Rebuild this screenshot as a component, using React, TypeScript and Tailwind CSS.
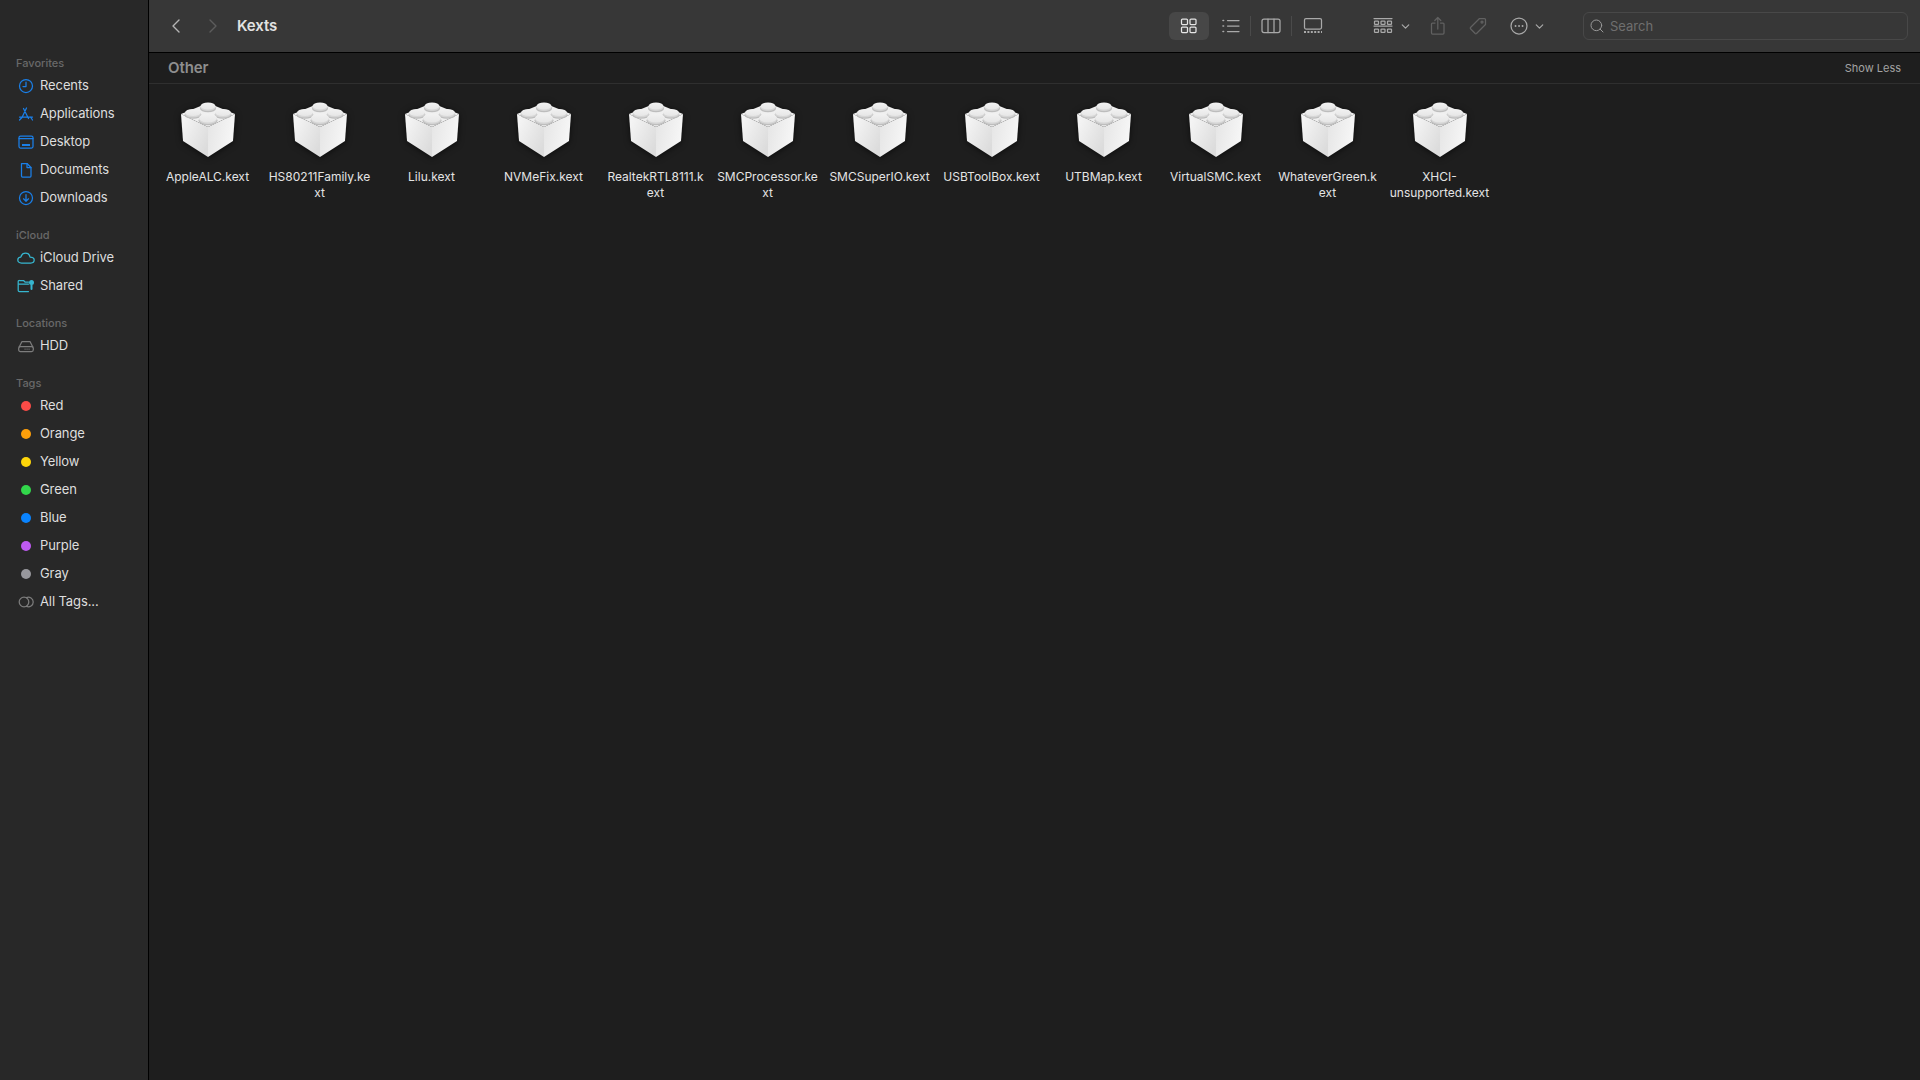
import type { ReactNode } from "react";
import { ChevronLeft, ChevronRight, ChevronDown, Search } from "lucide-react";

const font = "font-['Inter','Liberation_Sans',sans-serif]";

const Icon = ({ children, w = 20, h = 20, vb, className }: { children: ReactNode; w?: number; h?: number; vb?: string; className?: string }) => (
  <svg width={w} height={h} viewBox={vb ?? `0 0 ${w} ${h}`} fill="none" stroke="currentColor" strokeWidth="1.25" strokeLinecap="round" strokeLinejoin="round" className={className}>
    {children}
  </svg>
);

const Stud = ({ cx, cy, rx, ry }: { cx: number; cy: number; rx: number; ry: number }) => (
  <g>
    <ellipse cx={cx} cy={cy + 2.5} rx={rx + 0.5} ry={ry + 0.3} fill="#bdbdbd" />
    <ellipse cx={cx} cy={cy + 1.5} rx={rx} ry={ry} fill="#d6d6d6" />
    <ellipse cx={cx} cy={cy} rx={rx} ry={ry} fill="url(#studTop)" />
  </g>
);

const KextIcon = () => (
  <svg width="60" height="60" viewBox="0 0 60 60" className="drop-shadow-[0_1px_3px_rgba(0,0,0,0.6)]">
    <defs>
      <linearGradient id="leftFace" x1="0" y1="0" x2="1" y2="0.7">
        <stop offset="0" stopColor="#f8f8f8" />
        <stop offset="1" stopColor="#dcdcdc" />
      </linearGradient>
      <linearGradient id="rightFace" x1="0" y1="0.3" x2="1" y2="0.6">
        <stop offset="0" stopColor="#e6e6e6" />
        <stop offset="1" stopColor="#f8f8f8" />
      </linearGradient>
      <linearGradient id="studTop" x1="0" y1="0" x2="0" y2="1">
        <stop offset="0" stopColor="#f2f2f2" />
        <stop offset="1" stopColor="#e6e6e6" />
      </linearGradient>
    </defs>
    <path d="M3 14 L30 3 L57 14 L30 27 Z" fill="#efefef" />
    <path d="M3 14 L30 27 L30 57 L5 41 Z" fill="url(#leftFace)" />
    <path d="M57 14 L30 27 L30 57 L55 41 Z" fill="url(#rightFace)" />
    <Stud cx={30} cy={6} rx={7.5} ry={3.5} />
    <Stud cx={15} cy={12.5} rx={8} ry={3.5} />
    <Stud cx={45} cy={12.5} rx={8} ry={3.5} />
    <Stud cx={30} cy={18} rx={9} ry={4.5} />
  </svg>
);

const ClockIcon = () => (
  <Icon>
    <circle cx="10" cy="10" r="6.5" />
    <path d="M10 6 V10.5 H7" />
  </Icon>
);
const AppsIcon = () => (
  <Icon>
    <path d="M10.5 4 L6 13.5 M7.5 4.5 L12.5 14.5 M3.5 13 H16.5 M3.5 16 L6 13.5 M14.5 13 L16.5 16" />
  </Icon>
);
const DesktopIcon = () => (
  <Icon>
    <rect x="3" y="4" width="14" height="12" rx="1.5" />
    <path d="M3 6.5 H17" />
    <path d="M6 13 H14" strokeWidth="2" strokeLinecap="butt" />
  </Icon>
);
const DocIcon = () => (
  <Icon>
    <path d="M5.5 3.5 H11 L15 7.5 V16 A1 1 0 0 1 14 17 H6.5 A1 1 0 0 1 5.5 16 Z" />
    <path d="M11 3.5 V7.5 H15" />
  </Icon>
);
const DownloadIcon = () => (
  <Icon>
    <circle cx="10" cy="10" r="6.5" />
    <path d="M10 6.5 V13 M7.5 10.8 L10 13.3 L12.5 10.8" />
  </Icon>
);
const CloudIcon = () => (
  <Icon>
    <path d="M5.5 15 C3 15 1.8 13.6 1.8 12 C1.8 10.4 3.2 9.3 4.8 9.2 C5.4 6.8 7.4 5.2 9.6 5.2 C11.9 5.2 13.6 6.9 14 9 C16.5 9 18.2 10.2 18.2 12.1 C18.2 13.8 17 15 14.8 15 Z" />
  </Icon>
);
const SharedIcon = () => (
  <Icon>
    <path d="M12.5 15.5 H3.5 A1.2 1.2 0 0 1 2.2 14.3 V5.7 A1.2 1.2 0 0 1 3.5 4.5 H7.5 L9 6 H12.5 M2.2 8 H12.5" />
    <circle cx="15.5" cy="6.5" r="2.5" fill="currentColor" stroke="none" />
    <path d="M15.5 9 V13" strokeWidth="2" />
  </Icon>
);
const HddIcon = () => (
  <Icon>
    <path d="M3.2 11 L6 5.5 H14 L16.8 11" />
    <rect x="2.7" y="10.5" width="14.6" height="5" rx="1.8" />
    <path d="M9 13 H9.1 M11 13 H11.1 M13 13 H13.1" />
  </Icon>
);
const TagsIcon = () => (
  <Icon>
    <circle cx="8" cy="10" r="4.8" />
    <path d="M10.5 5.6 A4.8 4.8 0 1 1 10.5 14.4" />
  </Icon>
);

const GridIcon = () => (
  <Icon>
    <rect x="2.5" y="3" width="6" height="5.5" rx="1" />
    <rect x="11" y="3" width="6" height="5.5" rx="1" />
    <rect x="2.5" y="11" width="6" height="5.5" rx="1" />
    <rect x="11" y="11" width="6" height="5.5" rx="1" />
  </Icon>
);
const ListIcon = () => (
  <Icon>
    <path d="M6.5 4.5 H18 M6.5 10 H18 M6.5 15.5 H18" />
    <path d="M2 4.5 H2.6 M2 10 H2.6 M2 15.5 H2.6" strokeWidth="1.6" />
  </Icon>
);
const ColumnsIcon = () => (
  <Icon>
    <rect x="1" y="3" width="18" height="13.5" rx="2" />
    <path d="M7 3 V16.5 M13 3 V16.5" />
  </Icon>
);
const GalleryIcon = () => (
  <Icon>
    <rect x="1.5" y="2.5" width="17" height="10.5" rx="1.5" />
    <path d="M1 16 H19" strokeWidth="2" strokeDasharray="2 1.4" strokeLinecap="butt" />
  </Icon>
);
const GroupIcon = () => (
  <Icon>
    <path d="M1 2.5 H19 M1 10 H19" />
    <rect x="1.5" y="5" width="4" height="3.3" rx="0.6" />
    <rect x="8" y="5" width="4" height="3.3" rx="0.6" />
    <rect x="14.5" y="5" width="4" height="3.3" rx="0.6" />
    <rect x="1.5" y="13" width="4" height="3.3" rx="0.6" />
    <rect x="8" y="13" width="4" height="3.3" rx="0.6" />
    <rect x="14.5" y="13" width="4" height="3.3" rx="0.6" />
  </Icon>
);
const ShareIcon = () => (
  <Icon>
    <path d="M7 7 H4.5 A1 1 0 0 0 3.5 8 V17 A1 1 0 0 0 4.5 18 H15 A1 1 0 0 0 16 17 V8 A1 1 0 0 0 15 7 H12.5" />
    <path d="M9.8 13 V1.5 M6.8 4.5 L9.8 1.5 L12.8 4.5" />
  </Icon>
);
const TagIcon = () => (
  <Icon>
    <path d="M11.5 2.5 H16.5 A1 1 0 0 1 17.5 3.5 V8.5 L8.5 17.5 A1 1 0 0 1 7.2 17.5 L2.5 12.8 A1 1 0 0 1 2.5 11.5 Z" />
    <circle cx="14" cy="6" r="1" />
  </Icon>
);
const MoreIcon = () => (
  <Icon>
    <circle cx="10" cy="10" r="8" />
    <path d="M6.5 10 H6.6 M10 10 H10.1 M13.5 10 H13.6" strokeWidth="1.8" />
  </Icon>
);

const Dot = ({ color }: { color: string }) => <span className={`w-[10px] h-[10px] rounded-full ${color}`}></span>;

const Row = ({ icon, label, color }: { icon: ReactNode; label: string; color?: string }) => (
  <div className="h-[28px] flex items-center">
    <div className={`ml-[16px] w-[20px] mr-[4px] flex justify-center ${color ?? ""}`}>{icon}</div>
    <span className="text-[13px] tracking-[-0.1px] text-[#dedede]">{label}</span>
  </div>
);

const Heading = ({ children, first }: { children: string; first?: boolean }) => (
  <div className={`h-[17px] pl-[16px] text-[11px] leading-[16px] font-medium text-[#696969] ${first ? "" : "mt-[15px]"}`}>{children}</div>
);

const Sidebar = () => (
  <aside className="w-[149px] shrink-0 h-full bg-[#282828] border-r border-black pt-[55px]">
    <Heading first>Favorites</Heading>
    <Row icon={<ClockIcon />} label="Recents" color="text-[#1a7fe8]" />
    <Row icon={<AppsIcon />} label="Applications" color="text-[#1a7fe8]" />
    <Row icon={<DesktopIcon />} label="Desktop" color="text-[#1a7fe8]" />
    <Row icon={<DocIcon />} label="Documents" color="text-[#1a7fe8]" />
    <Row icon={<DownloadIcon />} label="Downloads" color="text-[#1a7fe8]" />
    <Heading>iCloud</Heading>
    <Row icon={<CloudIcon />} label="iCloud Drive" color="text-[#36b6cf]" />
    <Row icon={<SharedIcon />} label="Shared" color="text-[#36b6cf]" />
    <Heading>Locations</Heading>
    <Row icon={<HddIcon />} label="HDD" color="text-[#7c7c7c]" />
    <Heading>Tags</Heading>
    <Row icon={<Dot color="bg-[#fa4b47]" />} label="Red" />
    <Row icon={<Dot color="bg-[#fe9f0a]" />} label="Orange" />
    <Row icon={<Dot color="bg-[#fed60a]" />} label="Yellow" />
    <Row icon={<Dot color="bg-[#32d74b]" />} label="Green" />
    <Row icon={<Dot color="bg-[#0a84ff]" />} label="Blue" />
    <Row icon={<Dot color="bg-[#bf5af2]" />} label="Purple" />
    <Row icon={<Dot color="bg-[#98989d]" />} label="Gray" />
    <Row icon={<TagsIcon />} label="All Tags..." color="text-[#7c7c7c]" />
  </aside>
);

const Toolbar = () => (
  <header className="h-[53px] shrink-0 bg-[#373737] border-b border-black flex items-center pl-[9px] pr-[12px]">
    <div className="w-[36px] flex justify-center text-[#b5b5b5]">
      <ChevronLeft size={24} strokeWidth={1.4} />
    </div>
    <div className="w-[37px] flex justify-center text-[#5c5c5c]">
      <ChevronRight size={24} strokeWidth={1.4} />
    </div>
    <h1 className="ml-[6px] text-[15px] tracking-[-0.1px] font-semibold text-[#e2e2e2]">Kexts</h1>
    <div className="ml-auto flex items-center text-[#a9a9a9]">
      <div className="w-[40px] h-[28px] rounded-md bg-[#474747] flex items-center justify-center text-[#e6e6e6]">
        <GridIcon />
      </div>
      <div className="w-[41px] pl-[2px] flex justify-center"><ListIcon /></div>
      <div className="w-px h-[20px] bg-[#4a4a4a]"></div>
      <div className="w-[40px] flex justify-center"><ColumnsIcon /></div>
      <div className="w-px h-[20px] bg-[#4a4a4a]"></div>
      <div className="w-[42px] flex justify-center"><GalleryIcon /></div>
      <div className="ml-[39px] flex items-center">
        <GroupIcon />
        <ChevronDown size={13} strokeWidth={2.2} className="ml-[6px]" />
      </div>
      <div className="ml-[16px] text-[#616161]"><ShareIcon /></div>
      <div className="ml-[20px] text-[#616161]"><TagIcon /></div>
      <div className="ml-[21px] flex items-center">
        <MoreIcon />
        <ChevronDown size={13} strokeWidth={2.2} className="ml-[4px]" />
      </div>
    </div>
    <div className="ml-[37px] w-[325px] h-[28px] rounded-md border border-[#484848] flex items-center pl-[5px]">
      <Search size={16} strokeWidth={1.5} className="text-[#999999]" />
      <span className="ml-[5px] mt-[2px] text-[13px] text-[#6f6f6f]">Search</span>
    </div>
  </header>
);

const kexts: string[][] = [
  ["AppleALC.kext"],
  ["HS80211Family.ke", "xt"],
  ["Lilu.kext"],
  ["NVMeFix.kext"],
  ["RealtekRTL8111.k", "ext"],
  ["SMCProcessor.ke", "xt"],
  ["SMCSuperIO.kext"],
  ["USBToolBox.kext"],
  ["UTBMap.kext"],
  ["VirtualSMC.kext"],
  ["WhateverGreen.k", "ext"],
  ["XHCI-", "unsupported.kext"],
];

const KextItem = ({ lines }: { lines: string[] }) => (
  <div className="w-[112px] flex flex-col items-center">
    <KextIcon />
    <div className="mt-[9px] pr-[1px] text-center text-[12px] leading-[16px] text-[#e4e4e4]">
      {lines.map((line) => (
        <div key={line} className="whitespace-nowrap">{line}</div>
      ))}
    </div>
  </div>
);

export default function App() {
  return (
    <div className={`w-screen h-screen overflow-hidden flex bg-[#1e1e1e] ${font}`}>
      <Sidebar />
      <main className="flex-1 flex flex-col min-w-0">
        <Toolbar />
        <div className="h-[31px] shrink-0 border-b border-[#2f2f2f] flex items-center justify-between pl-[19px] pr-[19px]">
          <span className="text-[15px] tracking-[-0.1px] font-semibold text-[#8e8e8e]">Other</span>
          <span className="text-[11px] text-[#a3a3a3]">Show Less</span>
        </div>
        <div className="flex pl-[3px] pt-[16px]">
          {kexts.map((lines) => (
            <KextItem key={lines[0]} lines={lines} />
          ))}
        </div>
      </main>
    </div>
  );
}
